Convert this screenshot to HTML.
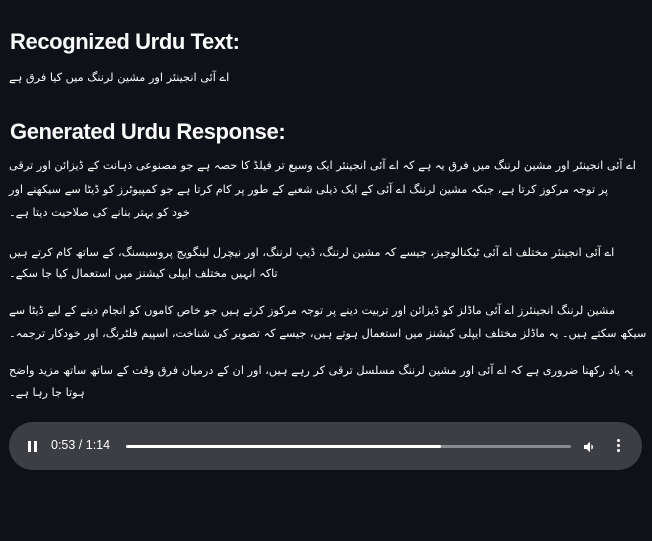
<!DOCTYPE html>
<html><head><meta charset="utf-8"><style>
body{margin:0;background:#0e1117;width:652px;height:541px;overflow:hidden;color:#fafafa;font-family:"Liberation Sans",sans-serif;}
h2{position:absolute;left:10px;margin:0;font-size:22px;font-weight:bold;letter-spacing:-0.4px;}
.l{position:absolute;left:9px;white-space:nowrap;font-family:"DejaVu Sans",sans-serif;font-size:11.3px;direction:rtl;text-align:left;unicode-bidi:plaintext;}
.player{position:absolute;left:9px;top:422px;width:633px;height:48px;border-radius:24px;background:#3c3e43;}
</style></head><body>
<h2 style="top:29px">Recognized Urdu Text:</h2>
<div class="l" style="top:71px">اے آئی انجینئر اور مشین لرننگ میں کیا فرق ہے</div>
<h2 style="top:119px">Generated Urdu Response:</h2>
<div class="l" style="top:159px">اے آئی انجینئر اور مشین لرننگ میں فرق یہ ہے کہ اے آئی انجینئر ایک وسیع تر فیلڈ کا حصہ ہے جو مصنوعی ذہانت کے ڈیزائن اور ترقی</div>
<div class="l" style="top:183px">پر توجہ مرکوز کرتا ہے، جبکہ مشین لرننگ اے آئی کے ایک ذیلی شعبے کے طور پر کام کرتا ہے جو کمپیوٹرز کو ڈیٹا سے سیکھنے اور</div>
<div class="l" style="top:206px">خود کو بہتر بنانے کی صلاحیت دیتا ہے۔</div>
<div class="l" style="top:246px">اے آئی انجینئر مختلف اے آئی ٹیکنالوجیز، جیسے کہ مشین لرننگ، ڈیپ لرننگ، اور نیچرل لینگویج پروسیسنگ، کے ساتھ کام کرتے ہیں</div>
<div class="l" style="top:267px">تاکہ انہیں مختلف ایپلی کیشنز میں استعمال کیا جا سکے۔</div>
<div class="l" style="top:304px">مشین لرننگ انجینئرز اے آئی ماڈلز کو ڈیزائن اور تربیت دینے پر توجہ مرکوز کرتے ہیں جو خاص کاموں کو انجام دینے کے لیے ڈیٹا سے</div>
<div class="l" style="top:327px">سیکھ سکتے ہیں۔ یہ ماڈلز مختلف ایپلی کیشنز میں استعمال ہوتے ہیں، جیسے کہ تصویر کی شناخت، اسپیم فلٹرنگ، اور خودکار ترجمہ۔</div>
<div class="l" style="top:364px">یہ یاد رکھنا ضروری ہے کہ اے آئی اور مشین لرننگ مسلسل ترقی کر رہے ہیں، اور ان کے درمیان فرق وقت کے ساتھ ساتھ مزید واضح</div>
<div class="l" style="top:386px">ہوتا جا رہا ہے۔</div>
<div class="player">
 <div style="position:absolute;left:19px;top:19px;width:3px;height:11px;background:#fff"></div>
 <div style="position:absolute;left:25px;top:19px;width:3px;height:11px;background:#fff"></div>
 <div style="position:absolute;left:42px;top:16px;font-size:12.5px;color:#fff">0:53 / 1:14</div>
 <div style="position:absolute;left:117px;top:23px;width:445px;height:3px;background:#8a8b8e;border-radius:2px"></div>
 <div style="position:absolute;left:117px;top:23px;width:315px;height:3px;background:#fff;border-radius:2px"></div>
 <svg style="position:absolute;left:573px;top:17px" width="16" height="16" viewBox="0 0 24 24"><path fill="#fff" d="M3 9v6h4l5 5V4L7 9H3zm13.5 3A4.5 4.5 0 0 0 14 8v8a4.5 4.5 0 0 0 2.5-4z"/></svg>
 <div style="position:absolute;left:608px;top:17px;width:3px;height:3px;background:#fff;border-radius:50%;box-shadow:0 5px 0 #fff,0 10px 0 #fff"></div>
</div>
</body></html>
